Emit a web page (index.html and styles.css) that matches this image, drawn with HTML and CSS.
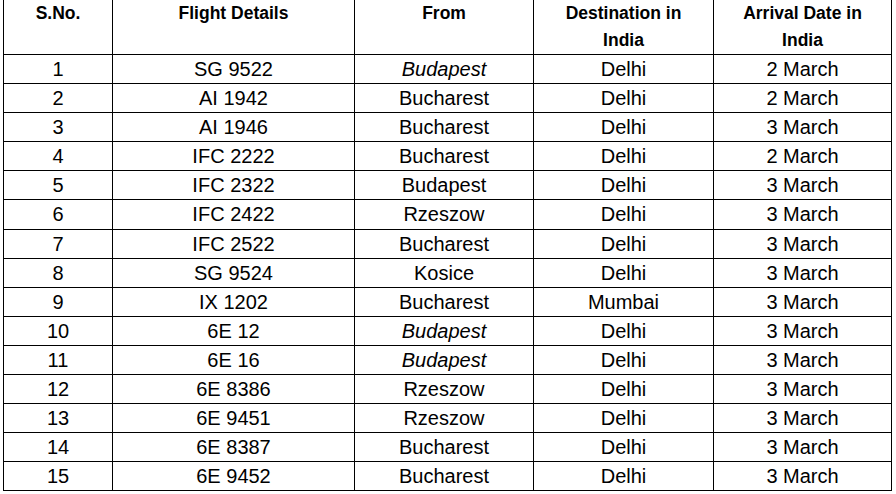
FILE: index.html
```html
<!DOCTYPE html>
<html>
<head>
<meta charset="utf-8">
<link rel="stylesheet" href="styles.css">
</head>
<body>
<table class="flights">
  <colgroup>
    <col class="c1"><col class="c2"><col class="c3"><col class="c4"><col class="c5">
  </colgroup>
  <thead>
    <tr>
      <th>S.No.</th>
      <th>Flight Details</th>
      <th>From</th>
      <th>Destination in<br>India</th>
      <th>Arrival Date in<br>India</th>
    </tr>
  </thead>
  <tbody>
    <tr><td>1</td><td>SG 9522</td><td class="it">Budapest</td><td>Delhi</td><td>2 March</td></tr>
    <tr><td>2</td><td>AI 1942</td><td>Bucharest</td><td>Delhi</td><td>2 March</td></tr>
    <tr><td>3</td><td>AI 1946</td><td>Bucharest</td><td>Delhi</td><td>3 March</td></tr>
    <tr><td>4</td><td>IFC 2222</td><td>Bucharest</td><td>Delhi</td><td>2 March</td></tr>
    <tr><td>5</td><td>IFC 2322</td><td>Budapest</td><td>Delhi</td><td>3 March</td></tr>
    <tr><td>6</td><td>IFC 2422</td><td>Rzeszow</td><td>Delhi</td><td>3 March</td></tr>
    <tr><td>7</td><td>IFC 2522</td><td>Bucharest</td><td>Delhi</td><td>3 March</td></tr>
    <tr><td>8</td><td>SG 9524</td><td>Kosice</td><td>Delhi</td><td>3 March</td></tr>
    <tr><td>9</td><td>IX 1202</td><td>Bucharest</td><td>Mumbai</td><td>3 March</td></tr>
    <tr><td>10</td><td>6E 12</td><td class="it">Budapest</td><td>Delhi</td><td>3 March</td></tr>
    <tr><td>11</td><td>6E 16</td><td class="it">Budapest</td><td>Delhi</td><td>3 March</td></tr>
    <tr><td>12</td><td>6E 8386</td><td>Rzeszow</td><td>Delhi</td><td>3 March</td></tr>
    <tr><td>13</td><td>6E 9451</td><td>Rzeszow</td><td>Delhi</td><td>3 March</td></tr>
    <tr><td>14</td><td>6E 8387</td><td>Bucharest</td><td>Delhi</td><td>3 March</td></tr>
    <tr><td>15</td><td>6E 9452</td><td>Bucharest</td><td>Delhi</td><td>3 March</td></tr>
  </tbody>
</table>
</body>
</html>
```
FILE: styles.css
```css
html, body {
  margin: 0;
  padding: 0;
  background: #fff;
}
body {
  font-family: "Liberation Sans", Arial, sans-serif;
  color: #000;
}
.flights {
  border-collapse: collapse;
  table-layout: fixed;
  width: 888px;
  margin: -1px 0 0 3px;
}
.c1 { width: 109px; }
.c2 { width: 242px; }
.c3 { width: 179px; }
.c4 { width: 180px; }
.c5 { width: 178px; }
.flights th,
.flights td {
  border: 1px solid #000;
  padding: 0;
  text-align: center;
}
.flights th {
  font-size: 17.5px;
  font-weight: bold;
  line-height: 27px;
  height: 55px;
  vertical-align: top;
  padding-top: 0;
  box-sizing: border-box;
}
.flights td {
  font-size: 20px;
  line-height: 28.1px;
  height: 28.1px;
}
.flights .it {
  font-style: italic;
}
```
